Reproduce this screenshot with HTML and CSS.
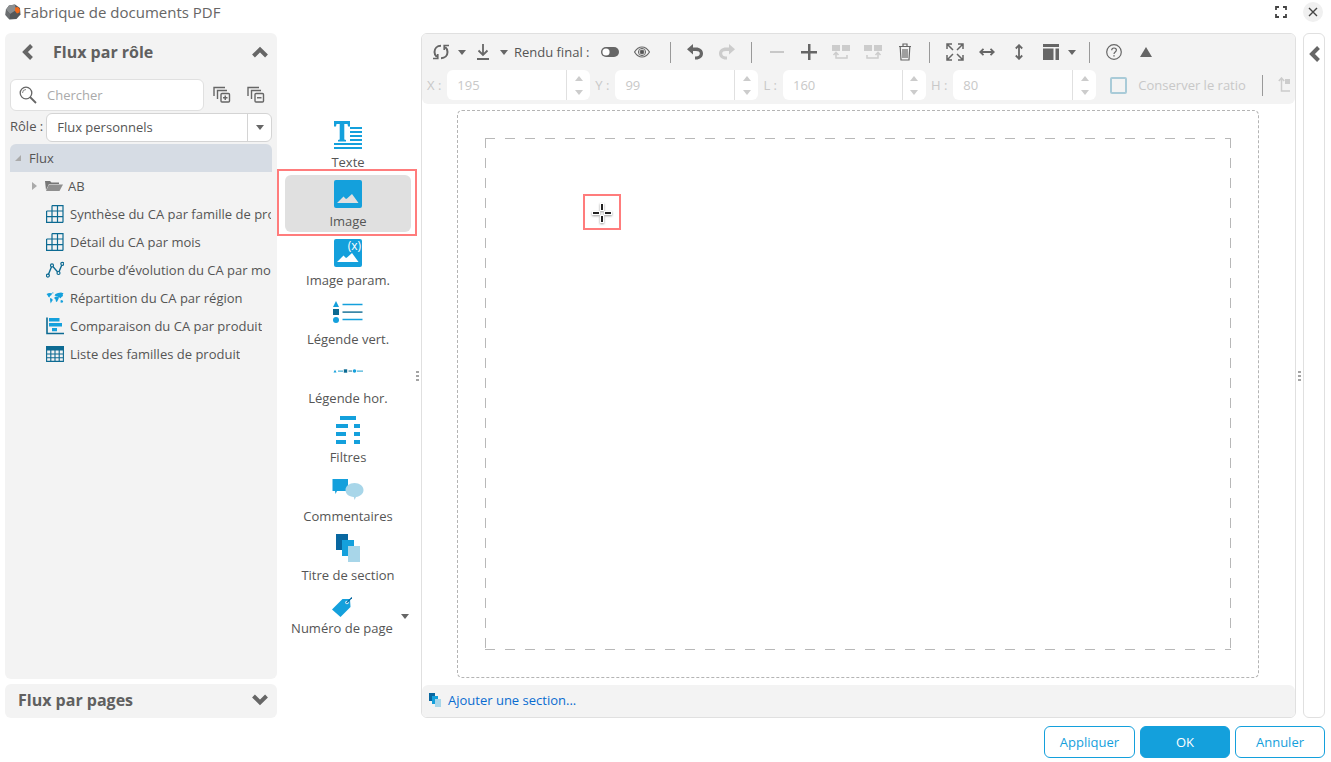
FILE: index.html
```html
<!DOCTYPE html>
<html lang="fr">
<head>
<meta charset="utf-8">
<title>Fabrique de documents PDF</title>
<link rel="stylesheet" href="styles.css">
</head>
<body>
<header class="titlebar">
  <svg class="logo" width="16" height="16" viewBox="0 0 16 16"><path d="M4 1.500 10 .5l5 3.500.5 6.500-4 4.500-7 .5L.5 11l.5-5.500z" fill="#55585a"/><path d="M4 1.500 10 .5l1 5.500-6 4-4-4.500z" fill="#8b8e90"/><path d="M1 5.500 5 10l-.5 5.500L.5 11z" fill="#6b6e70"/><path d="M10 3.500 13 3l2 2.500-.5 3-2.500 1-2-2.500z" fill="#f26a1b"/></svg>
  <h1 class="title">Fabrique de documents PDF</h1>
  <button class="win-btn" aria-label="Plein écran"><svg width="12" height="12" viewBox="0 0 12 12" fill="none" stroke="#444" stroke-width="1.800"><path d="M1 4V1h3M8 1h3v3M11 8v3H8M4 11H1V8"/></svg></button>
  <button class="win-btn round" aria-label="Fermer"><svg width="10" height="10" viewBox="0 0 10 10" stroke="#444" stroke-width="1.400"><path d="M1 1l8 8M9 1 1 9"/></svg></button>
</header>

<main class="workspace">
  <aside class="sidebar">
    <section class="panel panel-main">
      <div class="panel-head">
        <button class="icon-btn back" aria-label="Retour"><svg width="12" height="16" viewBox="0 0 12 16" fill="none" stroke="#666" stroke-width="4"><path d="M10.500 1.500 4 8l6.500 6.500"/></svg></button>
        <h2 class="panel-title">Flux par rôle</h2>
        <button class="icon-btn" aria-label="Replier"><svg width="16" height="12" viewBox="0 0 16 12" fill="none" stroke="#666" stroke-width="4"><path d="M1.500 10 8 3.500l6.500 6.500"/></svg></button>
      </div>
      <div class="search-row">
        <label class="search">
          <svg width="18" height="18" viewBox="0 0 18 18" fill="none" stroke="#666"><circle cx="7" cy="7" r="5.800" stroke-width="1.300"/><path d="M3.500 7A3.500 3.500 0 0 1 7 3.500" stroke-width=".8"/><path d="m11 11 6 6" stroke-width="1.800"/></svg>
          <input class="search-input" type="text" placeholder="Chercher" aria-label="Chercher">
        </label>
        <button class="icon-btn tree-btn first" aria-label="Tout déplier"><svg width="18" height="18" viewBox="0 0 18 18" fill="none" stroke="#666" stroke-width="1.400"><path d="M1 10V1.500h11M4.500 13V4.500H14"/><rect x="8" y="7.500" width="8.500" height="8.500" rx="1"/><path d="M12.250 9.500v4.500M10 11.750h4.500"/></svg></button>
        <button class="icon-btn tree-btn" aria-label="Tout replier"><svg width="18" height="18" viewBox="0 0 18 18" fill="none" stroke="#666" stroke-width="1.400"><path d="M1 10V1.500h11M4.500 13V4.500H14"/><rect x="8" y="7.500" width="8.500" height="8.500" rx="1"/><path d="M10 11.750h4.500"/></svg></button>
      </div>
      <div class="role-row">
        <label for="role">Rôle :</label>
        <div class="select-box">
          <select id="role" class="select"><option>Flux personnels</option></select>
          <span class="select-arrow"><i class="caret"></i></span>
        </div>
      </div>
      <ul class="tree">
        <li class="node root"><svg width="6" height="6" viewBox="0 0 6 6"><path d="M6 0v6H0z" fill="#aaa"/></svg><span>Flux</span></li>
        <li class="node folder"><svg width="5" height="8" viewBox="0 0 5 8"><path d="M0 0l5 4-5 4z" fill="#aaa"/></svg><svg class="folder-icon" width="18" height="12" viewBox="0 0 18 12"><path d="M0 1h5l1.500 1.500H14V4H4L1 10z" fill="#777"/><path d="M4 4.500h14L14.500 11H1z" fill="#8f8f8f"/></svg><span>AB</span></li>
        <li class="node leaf"><svg width="18" height="18" viewBox="0 0 18 18" fill="none" stroke="#0c6a92" stroke-width="1.200"><path d="M6 .6h11v16.800M6 .6v16.800M11.500.6v16.800M.6 6v11.400H17M.6 6H17M.6 11.600H17"/></svg><span>Synthèse du CA par famille de produit</span></li>
        <li class="node leaf"><svg width="18" height="18" viewBox="0 0 18 18" fill="none" stroke="#0c6a92" stroke-width="1.200"><path d="M6 .6h11v16.800M6 .6v16.800M11.500.6v16.800M.6 6v11.400H17M.6 6H17M.6 11.600H17"/></svg><span>Détail du CA par mois</span></li>
        <li class="node leaf"><svg width="18" height="18" viewBox="0 0 18 18" fill="#f3f3f3" stroke="#0c6a92" stroke-width="1.200"><path d="M2 14.500 6 4.500 12.500 12 16 3.500" fill="none" stroke-width="1.400"/><circle cx="1.900" cy="14.600" r="1.500"/><circle cx="6" cy="4.400" r="1.500"/><circle cx="12.500" cy="12" r="1.500"/><circle cx="16.300" cy="2.800" r="1.500"/></svg><span>Courbe d’évolution du CA par mois</span></li>
        <li class="node leaf"><svg width="18" height="12" viewBox="0 0 18 12" fill="#14a0dc"><path d="M.5 2 3 1l3 .2L5.500 3 4 4 3.500 5.500 2.500 5 1.500 3.300zM6 .5h1.500L7 2zM4 6l2 .8.8 1.200L5.500 10l-.8 1.500-.5-2.500zM8.500 5.200 10 4.500l2 .5.700 1.500-1 2-.8 1.500-1-.5-.3-2-1.200-1zM8.500 3.500l1-1.500L12 1l3-.5 2.500.8-.8 1.200.3 1.500-1.500 1-1 1.500-.8-1.300-.9 1-.8-1.400-2-.7zM14.500 8.500 16 8l1.200 1.200-.5 1.300-2 .2z"/></svg><span>Répartition du CA par région</span></li>
        <li class="node leaf"><svg width="18" height="18" viewBox="0 0 18 18"><path d="M1 .5v16h17" fill="none" stroke="#0c6a92" stroke-width="1.600"/><path d="M3 1h10.500v3.500H3zM3 6h13v3.500H3zM6 11h5v3.300H6z" fill="#14a0dc"/></svg><span>Comparaison du CA par produit</span></li>
        <li class="node leaf"><svg width="18" height="16" viewBox="0 0 18 16" fill="none" stroke="#0c6a92" stroke-width="1.100"><path d="M0 0h18v4.500H0z" fill="#0c6a92" stroke="none"/><path d="M.6 4v11.400h16.800V4M4.800 4v11.400M9 4v11.400M13.200 4v11.400M.6 8h16.800M.6 11.700h16.800"/></svg><span>Liste des familles de produit</span></li>
      </ul>
    </section>
    <section class="panel panel-foot">
      <h2 class="panel-title">Flux par pages</h2>
      <button class="icon-btn" aria-label="Déplier"><svg width="16" height="12" viewBox="0 0 16 12" fill="none" stroke="#666" stroke-width="4"><path d="M1.500 2 8 8.500 14.500 2"/></svg></button>
    </section>
  </aside>

  <nav class="palette">
    <button class="tool"><svg width="28" height="28" viewBox="0 0 28 28" fill="#14a0dc"><path d="M0 0h16v5.500h-2L13.500 3H10.300V18.600l1.700.4v1.500H4V19l1.700-.4V3H2.500L2 5.500H0z"/><path d="M16 6h12v2H16zM16 10h12v2H16zM16 14h12v2H16zM16 18h12v2H16zM0 22h28v2H0zM0 26h28v2H0z"/></svg><span>Texte</span></button>
    <button class="tool selected"><svg width="28" height="28" viewBox="0 0 28 28"><rect width="28" height="28" rx="2" fill="#14a0dc"/><path d="M3 23l6.500-6.500 2.500 2.500 1-.5 5-4.500 6.500 9z" fill="#e0e0e0"/></svg><span>Image</span><i class="frame"></i></button>
    <button class="tool"><svg width="28" height="28" viewBox="0 0 28 28"><rect width="28" height="28" rx="2" fill="#14a0dc"/><path d="M3 23l6.500-6.500 2.500 2.500 1-.5 5-4.500 6.500 9z" fill="#fff"/><text class="var-mark" x="27" y="11" text-anchor="end">(x)</text></svg><span>Image param.</span></button>
    <button class="tool"><svg width="30" height="22" viewBox="0 0 30 22" fill="#14a0dc"><path d="M3 0l3 6H0z"/><path d="M0 8h6v6H0z" fill="#0c6a92"/><circle cx="3" cy="19" r="3"/><path d="M9.500 2.800h20v1.400h-20zM9.500 17.800h20v1.400h-20z"/><path d="M9.500 10.400h20v1.400h-20z" fill="#0c6a92"/></svg><span>Légende vert.</span></button>
    <button class="tool"><svg width="30" height="4" viewBox="0 0 30 4"><path d="M2 .8l1.500 2.700h-3z" fill="#14a0dc"/><path d="M5 1.400h5v1.300H5zM24 1.400h6v1.300h-6z" fill="#4ab2d8"/><path d="M10.800.3h3.400v3.400h-3.400z" fill="#0c6a92"/><path d="M15.500 1.400h3.500v1.300h-3.500z" fill="#5590a8"/><circle cx="21.500" cy="2" r="1.800" fill="#14a0dc"/></svg><span>Légende hor.</span></button>
    <button class="tool"><svg width="24" height="28" viewBox="0 0 24 28" fill="#14a0dc"><path d="M4 0h16v4H4zM0 8h12v4H0zM18 8h6v4h-6zM0 16h10v4H0zM18 16h6v4h-6zM0 24h10v4H0zM18 24h6v4h-6z"/></svg><span>Filtres</span></button>
    <button class="tool"><svg width="32" height="22" viewBox="0 0 32 22"><path d="M.5 1H16v12H5l-1.500 3-.5-3H.5z" fill="#14a0dc"/><path d="M22.500 5c5 0 9 3 9 7s-3.500 6.500-7.500 7l-1.500 3-.7-3c-4.800-.3-8.300-3-8.300-7s4-7 9-7z" fill="#a8d6e9"/></svg><span>Commentaires</span></button>
    <button class="tool"><svg width="24" height="28" viewBox="0 0 24 28"><path d="M0 0h12v16H0z" fill="#0867a0"/><path d="M6 6h12v16H6z" fill="#14a0dc"/><path d="M12 12h12v16H12z" fill="#a8d6e9"/></svg><span>Titre de section</span></button>
    <div class="tool-split">
      <button class="tool tool-last"><svg width="20" height="20" viewBox="0 0 20 20"><path d="M0 12.500 10.500 2 18 2l.5 8L8.500 20z" fill="#14a0dc"/><circle cx="15" cy="5.500" r="1.800" fill="#d8eef8"/><path d="M14.500 6 20 .5" stroke="#0867a0" stroke-width="1.200"/></svg><span>Numéro de page</span></button>
      <button class="icon-btn more" aria-label="Plus d’options"><i class="caret"></i></button>
    </div>
    <span class="grip"><i></i><i></i><i></i></span>
  </nav>

  <section class="editor">
    <div class="toolbar">
      <div class="bar">
        <button class="tb" aria-label="Actualiser"><svg width="16" height="16" viewBox="0 0 16 16" fill="none" stroke="#666" stroke-width="2"><path d="M8 1.800C4 1.800 1.500 4.500 1.500 8c0 2 .8 3.700 2.300 5M8 14.200c4 0 6.500-2.700 6.500-6.200 0-2-.8-3.700-2.300-5"/><path d="M0 14.500h4.800V10M16 1.500h-4.800V6" stroke-width="1.600"/></svg></button>
        <button class="tb-caret" aria-label="Options d’actualisation"><i class="caret"></i></button>
        <button class="tb" aria-label="Télécharger"><svg width="14" height="16" viewBox="0 0 14 16" fill="none" stroke="#666" stroke-width="1.800"><path d="M7 0v11M2.500 6.500 7 11l4.500-4.500M1 15h12"/></svg></button>
        <button class="tb-caret" aria-label="Options de téléchargement"><i class="caret"></i></button>
        <span class="bar-text">Rendu final :</span>
        <button class="tb" aria-label="Rendu final"><svg width="18" height="10" viewBox="0 0 18 10"><rect width="18" height="10" rx="5" fill="#666"/><circle cx="5" cy="5" r="3.600" fill="#fff"/></svg></button>
        <button class="tb" aria-label="Aperçu"><svg width="16" height="12" viewBox="0 0 16 12" fill="none" stroke="#666"><path d="M.5 6C3 2 5.500 1 8 1s5 1 7.500 5C13 10 10.500 11 8 11S3 10 .5 6z" stroke-width="1.200"/><circle cx="8" cy="6" r="3.600" /><circle cx="8" cy="6" r="1.900" fill="#555"/></svg></button>
        <i class="sep wide"></i>
        <button class="tb" aria-label="Annuler l’action"><svg width="16" height="16" viewBox="0 0 16 16"><path d="M6 0v3.500h3c4 0 7 2.500 7 6s-3 6-7 6H8v-3h1c2.300 0 3.800-1.200 3.800-3S11.300 7 9 7H6v3.500L0 5.300z" fill="#666"/></svg></button>
        <button class="tb" aria-label="Rétablir" disabled><svg width="16" height="16" viewBox="0 0 16 16"><path d="M10 0v3.500H7c-4 0-7 2.500-7 6s3 6 7 6h1v-3H7c-2.300 0-3.800-1.200-3.800-3S4.700 7 7 7h3v3.500l6-5.200z" fill="#ccc"/></svg></button>
        <i class="sep"></i>
        <button class="tb" aria-label="Zoom arrière" disabled><svg width="14" height="2"><path d="M0 0h14v2H0z" fill="#c8c8c8"/></svg></button>
        <button class="tb" aria-label="Zoom avant"><svg width="16" height="16" viewBox="0 0 16 16"><path d="M7 0h2.500v7H16v2.500H9.500V16H7V9.500H0V7h7z" fill="#666"/></svg></button>
        <button class="tb" aria-label="Section précédente" disabled><svg width="18" height="16" viewBox="0 0 18 16" fill="none" stroke="#ccc" stroke-width="1.500"><path d="M0 1h8v6H0zM10 1h8v6h-8z" fill="#ccc" stroke="none"/><path d="M4 8v6h11v-3M1.500 11 4 8.300 6.500 11"/></svg></button>
        <button class="tb" aria-label="Section suivante" disabled><svg width="18" height="16" viewBox="0 0 18 16" fill="none" stroke="#ccc" stroke-width="1.500"><path d="M0 1h8v6H0zM10 1h8v6h-8z" fill="#ccc" stroke="none"/><path d="M14 8v6H3v-3M11.500 11 14 8.300l2.500 2.700"/></svg></button>
        <button class="tb" aria-label="Supprimer"><svg width="12" height="18" viewBox="0 0 12 18" fill="none" stroke="#666" stroke-width="1.200"><path d="M0 3.500h12M4 3V1h4v2M1.200 4l.8 13h8l.8-13M4 6v9M6 6v9M8 6v9"/></svg></button>
        <i class="sep"></i>
        <button class="tb" aria-label="Ajuster"><svg width="18" height="18" viewBox="0 0 18 18" fill="none" stroke="#666" stroke-width="1.500"><path d="M1 6V1h5M1 1l6 6M12 1h5v5M17 1l-6 6M17 12v5h-5M17 17l-6-6M6 17H1v-5M1 17l6-6"/></svg></button>
        <button class="tb" aria-label="Ajuster à la largeur"><svg width="16" height="8" viewBox="0 0 16 8" fill="none" stroke="#666" stroke-width="1.800"><path d="M1 4h14M4.500.8 1.200 4l3.300 3.200M11.500.8 14.800 4l-3.300 3.200"/></svg></button>
        <button class="tb" aria-label="Ajuster à la hauteur"><svg width="8" height="16" viewBox="0 0 8 16" fill="none" stroke="#666" stroke-width="1.800"><path d="M4 1v14M.8 4.500 4 1.200l3.200 3.300M.8 11.500 4 14.800l3.200-3.300"/></svg></button>
        <button class="tb" aria-label="Disposition"><svg width="16" height="16" viewBox="0 0 16 16" fill="#666"><path d="M0 0h16v3H0zM0 4.500h10.500V16H0zM12.500 4.500H16V16h-3.500z"/></svg></button>
        <button class="tb-caret" aria-label="Choix de disposition"><i class="caret"></i></button>
        <i class="sep wide"></i>
        <button class="tb" aria-label="Aide"><svg width="16" height="16" viewBox="0 0 16 16" fill="none" stroke="#666"><circle cx="8" cy="8" r="7.300" stroke-width="1.200"/><path d="M5.700 6.300C5.700 5 6.600 4 8 4s2.400.9 2.400 2.100C10.400 8 8 8 8 10" stroke-width="1.200"/><path d="M8 11.200v1.400" stroke-width="1.400"/></svg></button>
        <button class="tb" aria-label="Replier la barre"><svg width="12" height="10" viewBox="0 0 12 10"><path d="M6 0l6 10H0z" fill="#666"/></svg></button>
      </div>
      <div class="bar fields">
        <div class="field"><label for="fx">X :</label><div class="spin"><input id="fx" type="text" value="195" disabled><span class="steps"><i class="caret up"></i><i class="caret"></i></span></div></div>
        <div class="field"><label for="fy">Y :</label><div class="spin"><input id="fy" type="text" value="99" disabled><span class="steps"><i class="caret up"></i><i class="caret"></i></span></div></div>
        <div class="field"><label for="fl">L :</label><div class="spin"><input id="fl" type="text" value="160" disabled><span class="steps"><i class="caret up"></i><i class="caret"></i></span></div></div>
        <div class="field"><label for="fh">H :</label><div class="spin"><input id="fh" type="text" value="80" disabled><span class="steps"><i class="caret up"></i><i class="caret"></i></span></div></div>
        <label class="ratio"><input type="checkbox" disabled>Conserver le ratio</label>
        <i class="sep"></i>
        <button class="tb tb-end" aria-label="Aligner" disabled><svg width="12" height="16" viewBox="0 0 12 16" fill="none" stroke="#ccc" stroke-width="1.500"><path d="M3.500 1v13H12M.8 4l2.700-3 2.700 3"/><path d="M7 2h5v5H7z" fill="#ccc" stroke="none"/></svg></button>
      </div>
    </div>
    <div class="canvas">
      <div class="page">
        <svg class="page-edge" width="100%" height="100%"><rect width="100%" height="100%" rx="5"/></svg>
        <div class="print-area">
          <svg class="cross" width="38" height="36" viewBox="0 0 38 36"><rect x="1" y="1" width="36" height="34" fill="none" stroke="#ff7c7c" stroke-width="2"/><g class="cross-arms"><path d="M17 9h4v8h-4zM17 21h4v8h-4zM9 17h8v4H9zM21 17h8v4h-8z" fill="#fff"/><path d="M18 10h2v6h-2zM18 22h2v6h-2zM10 18h6v2h-6zM22 18h6v2h-6z" fill="#222"/></g></svg>
        </div>
      </div>
    </div>
    <div class="sections">
      <svg width="12" height="14" viewBox="0 0 24 28"><path d="M0 0h12v16H0z" fill="#0867a0"/><path d="M6 6h12v16H6z" fill="#14a0dc"/><path d="M12 12h12v16H12z" fill="#a8d6e9"/></svg>
      <a href="#section">Ajouter une section...</a>
    </div>
  </section>

  <div class="divider"><span class="grip"><i></i><i></i><i></i></span></div>
  <aside class="drawer">
    <button class="icon-btn" aria-label="Ouvrir le volet"><svg width="12" height="16" viewBox="0 0 12 16" fill="none" stroke="#666" stroke-width="4"><path d="M10.500 1.500 4 8l6.500 6.500"/></svg></button>
  </aside>
</main>

<footer class="actions">
  <button class="action">Appliquer</button>
  <button class="action primary">OK</button>
  <button class="action">Annuler</button>
</footer>
</body>
</html>
```

FILE: styles.css
```css
* { box-sizing: border-box; }

body {
  margin: 0;
  height: 100vh;
  display: flex;
  flex-direction: column;
  overflow: hidden;
  background: #fff;
  color: #555;
  font: 13px/20px "Open Sans", "Noto Sans", sans-serif;
}

button, input, select { font: inherit; color: inherit; margin: 0; }
button { border: 0; padding: 0; background: none; cursor: pointer; }
button:disabled { cursor: default; }
svg { display: block; flex: none; }
h1, h2 { margin: 0; }

.titlebar {
  display: flex;
  align-items: center;
  gap: 2px;
  height: 25px;
  padding: 0 8px 1px 5px;
}
.title { flex: 1; font-size: 15px; font-weight: 400; color: #666; }
.win-btn {
  display: flex;
  align-items: center;
  justify-content: center;
  width: 20px;
  height: 20px;
  border-radius: 10px;
}
.win-btn.round { background: #f0f0f0; margin-left: 10px; }

.workspace {
  flex: 1;
  display: flex;
  min-height: 0;
  padding: 8px 6px 8px 5px;
}

.sidebar { width: 272px; display: flex; flex-direction: column; gap: 5px; }
.panel { background: #f3f3f3; border-radius: 6px; }
.panel-main { flex: 1; padding: 0 5px; }
.panel-head { display: flex; align-items: center; height: 38px; padding: 0 4px 0 11px; }
.panel-title { flex: 1; font-size: 16px; font-weight: 700; color: #606060; }
.panel-foot { display: flex; align-items: center; height: 34px; padding: 0 9px 2px 13px; }
.icon-btn { display: flex; align-items: center; justify-content: center; }
.back { margin-right: 20px; }

.search-row { display: flex; align-items: center; margin-top: 8px; }
.search {
  flex: 1;
  display: flex;
  align-items: center;
  gap: 10px;
  min-width: 0;
  height: 32px;
  padding: 0 8px;
  background: #fff;
  border: 1px solid #e0e0e0;
  border-radius: 6px;
}
.search-input { flex: 1; min-width: 0; border: 0; padding: 0; outline: 0; background: none; }
.search-input::placeholder { color: #aaa; }
.tree-btn { width: 32px; }
.tree-btn.first { width: 36px; }

.role-row { display: flex; align-items: center; gap: 3px; margin-top: 2px; }
.role-row label { padding-bottom: 3px; }
.select-box { position: relative; flex: 1; }
.select {
  display: block;
  width: 100%;
  height: 29px;
  padding: 0 34px 2px 10px;
  appearance: none;
  background: #fff;
  border: 1px solid #d4d4d4;
  border-radius: 6px;
}
.select-arrow {
  position: absolute;
  top: 1px;
  right: 1px;
  bottom: 1px;
  width: 24px;
  display: flex;
  align-items: center;
  justify-content: center;
  border-left: 1px solid #d4d4d4;
  pointer-events: none;
}
.caret {
  width: 0;
  border: 4px solid transparent;
  border-top: 5px solid #666;
  border-bottom: 0;
}
.caret.up { border-top: 0; border-bottom: 5px solid #ccc; }

.tree { margin: 2px 0 0; padding: 0; list-style: none; }
.node {
  display: flex;
  align-items: center;
  height: 28px;
  white-space: nowrap;
}
.node span { overflow: hidden; }
.root { gap: 8px; padding-left: 5px; background: #d6dce4; border-radius: 6px 6px 0 0; }
.folder { gap: 8px; padding-left: 22px; }
.folder-icon { margin-right: -3px; }
.leaf { gap: 6px; padding: 0 1px 0 36px; }

.palette {
  width: 144px;
  padding: 83px 10px 0 8px;
  display: flex;
  flex-direction: column;
  gap: 2px;
  position: relative;
}
.tool {
  position: relative;
  display: grid;
  grid-template-rows: 30px 22px;
  justify-items: center;
  align-items: center;
  align-content: start;
  height: 57px;
  padding-top: 4px;
  row-gap: 1px;
  border-radius: 6px;
}
.tool.selected { background: #e0e0e0; }
.frame { position: absolute; inset: -6px -6px -4px -8px; border: 2px solid #ff7c7c; }
.var-mark { font: 12px "Open Sans", sans-serif; fill: #fff; }
.tool-split { display: flex; }
.tool-last {
  flex: 1;
  grid-template-rows: 20px 22px;
  height: 56px;
  padding-top: 9px;
  row-gap: 0;
  white-space: nowrap;
}
.more { width: 12px; }
.grip { display: flex; flex-direction: column; gap: 2px; }
.grip i { width: 3px; height: 2px; background: #a4a4a4; }
.palette .grip { position: absolute; right: 2px; top: 0; bottom: 0; justify-content: center; }

.editor {
  flex: 1;
  min-width: 0;
  display: flex;
  flex-direction: column;
  border: 1px solid #e0e0e0;
  border-radius: 6px;
  overflow: hidden;
}
.toolbar { background: #f3f3f3; padding-bottom: 4px; border-radius: 0 0 6px 6px; overflow: hidden; }
.bar { display: flex; align-items: center; height: 36px; padding-left: 3px; white-space: nowrap; }
.tb { flex: none; width: 32px; height: 32px; display: flex; align-items: center; justify-content: center; }
.tb-caret { flex: none; width: 10px; display: flex; justify-content: center; }
.bar-text { margin: 0 4px 0 5px; }
.sep { flex: none; width: 1px; height: 21px; margin: 0 9px 0 8px; background: #999; }
.sep.wide { margin-left: 12px; margin-right: 8px; }

.fields { height: 30px; padding-left: 5px; gap: 5px; color: #c8c8c8; }
.field { display: flex; align-items: center; gap: 6px; flex: none; }
.spin { display: flex; width: 143px; height: 30px; background: #fff; border-radius: 6px; }
.spin input { flex: 1; min-width: 0; border: 0; padding: 0 10px; background: none; color: #c8c8c8; }
.steps {
  width: 24px;
  display: flex;
  flex-direction: column;
  align-items: center;
  justify-content: center;
  gap: 9px;
  border-left: 1px solid #e0e0e0;
}
.steps .caret { border-top-color: #ccc; }
.ratio { display: flex; align-items: center; gap: 11px; margin: 0 3px 0 9px; }
.ratio input { appearance: none; width: 17px; height: 17px; border: 2px solid #a9cbd8; border-radius: 2px; }
.fields .sep { margin-right: 0; }
.fields .tb-end { justify-content: flex-end; width: 22px; }

.canvas { flex: 1; display: flex; min-height: 0; padding: 6px 36px 7px 35px; }
.page { flex: 1; display: flex; position: relative; padding: 28px; }
.page-edge { position: absolute; inset: 0; overflow: hidden; border-radius: 5px; }
.page-edge rect { fill: none; stroke: #b4b4b4; stroke-width: 2; stroke-dasharray: 3 2; }
.print-area {
  flex: 1;
  position: relative;
  --dash: #b8b8b8 0 10px, transparent 10px 20px;
  background:
    repeating-linear-gradient(to right, var(--dash)) top / 100% 1px no-repeat,
    repeating-linear-gradient(to right, var(--dash)) bottom / 100% 1px no-repeat,
    repeating-linear-gradient(to bottom, var(--dash)) left / 1px 100% no-repeat,
    repeating-linear-gradient(to bottom, var(--dash)) right / 1px 100% no-repeat;
}
.cross { position: absolute; left: 98px; top: 56px; }
.cross-arms { filter: drop-shadow(0 1px 1px #0006); }

.sections {
  display: flex;
  align-items: center;
  gap: 7px;
  height: 32px;
  padding: 0 7px 2px;
  background: #f3f3f3;
  border-radius: 6px 6px 0 0;
}
.sections a { color: #0a6cd0; text-decoration: none; }

.divider { width: 7px; display: flex; align-items: center; justify-content: center; }
.drawer {
  width: 22px;
  padding-top: 12px;
  border: 1px solid #e0e0e0;
  border-radius: 6px;
  display: flex;
  justify-content: center;
  align-items: flex-start;
}

.actions { display: flex; justify-content: flex-end; gap: 5px; padding: 0 6px 4px; }
.action {
  min-width: 90px;
  height: 32px;
  padding: 0 15px;
  color: #14a0dc;
  background: #fff;
  border: 1px solid #14a0dc;
  border-radius: 6px;
}
.action.primary { color: #fff; background: #14a0dc; }
```
